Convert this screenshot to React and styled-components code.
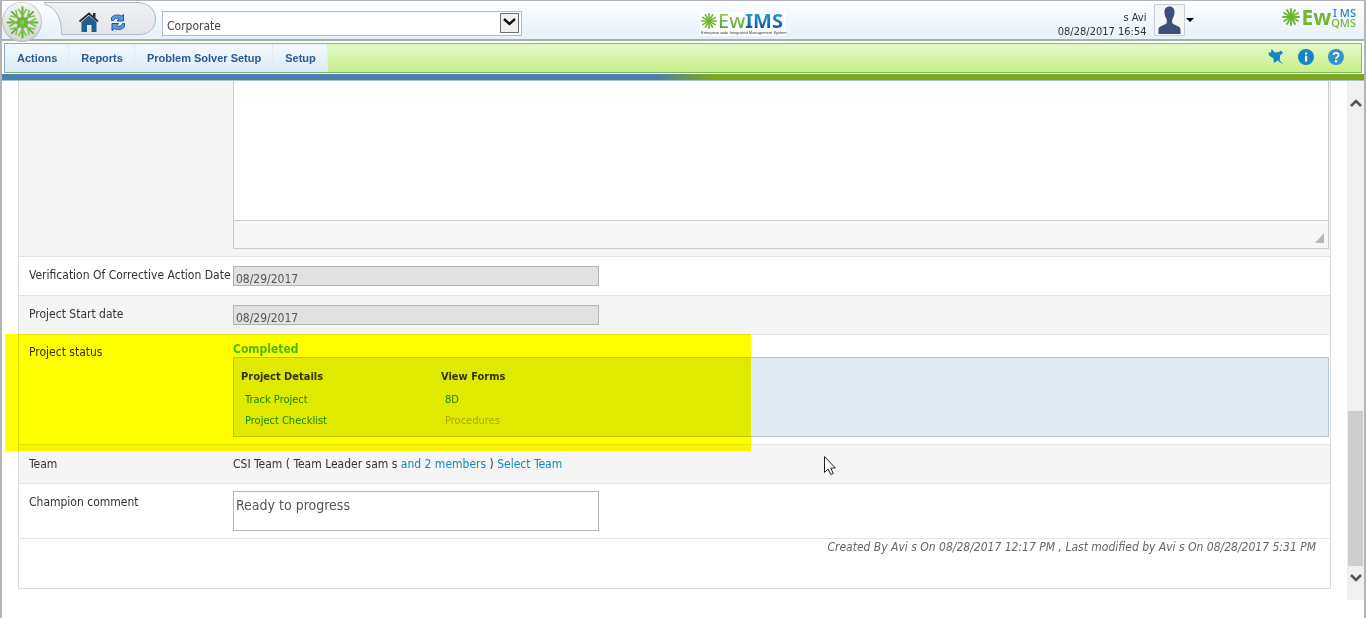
import React from "react";
import styled, { createGlobalStyle, css } from "styled-components";

const Global = createGlobalStyle`
  * { box-sizing: border-box; }
  html, body { margin: 0; background: #fff; }
  body {
    font-family: "DejaVu Sans Condensed", "Noto Sans", sans-serif;
    font-size: 12px;
    line-height: 16px;
    color: #333;
  }
  input, textarea, select, button { font-family: inherit; margin: 0; }
  a { text-decoration: none; }
`;

const Frame = styled.div`
  min-height: 100vh;
  border: solid #b4b4b8;
  border-width: 1px 2px 0 2px;
  display: flex;
  flex-direction: column;
`;

const Header = styled.header`
  height: 40px;
  flex: none;
  display: flex;
  align-items: flex-start;
  background: linear-gradient(#fdfeff, #e6f1fb);
  border-bottom: 2px solid #a4b39c;
`;

const OrbButton = styled.button`
  position: relative;
  z-index: 2;
  width: 42px;
  height: 42px;
  padding: 0;
  border: 0;
  background: none;
  flex: none;
  svg { display: block; }
`;

const QuickTab = styled.div`
  position: relative;
  width: 118px;
  height: 38px;
  flex: none;
  display: flex;
  justify-content: flex-end;
  gap: 10px;
  padding: 10px 36px 0 0;
`;

const TabShape = styled.svg`
  position: absolute;
  left: 0;
  top: 0;
`;

const IconLink = styled.a`
  position: relative;
  display: block;
  height: 22px;
  svg { display: block; }
`;

const OrgPicker = styled.label`
  position: relative;
  width: 360px;
  height: 25px;
  margin-top: 10px;
  svg { position: absolute; right: 2px; top: 2px; pointer-events: none; }
`;

const OrgSelect = styled.select`
  appearance: none;
  width: 100%;
  height: 25px;
  padding: 4px 24px 0 4px;
  border: 1px solid #b3b9c8;
  border-radius: 0;
  background: #fff;
  font-size: 12px;
  color: #444;
`;

const Center = styled.div`
  flex: 1;
  display: flex;
  padding: 11px 0 0 178px;
`;

const Product = styled.div`
  width: 86px;
  height: 24px;
  background: #fff;
`;

const ProductRow = styled.div`
  display: flex;
  align-items: center;
  height: 18px;
  font: 700 20px/18px "Noto Sans", sans-serif;
  svg { margin: 0 1px; flex: none; }
`;

const Tinted = styled.span`
  background: linear-gradient(${(p) => p.$from}, ${(p) => p.$to});
  background-clip: text;
  color: transparent;
  font-weight: ${(p) => p.$weight || 700};
`;

const Tagline = styled.div`
  padding-left: 1px;
  font: 400 4px/5px "Liberation Sans", sans-serif;
  color: #333;
  white-space: nowrap;
`;

const User = styled.button`
  display: flex;
  gap: 8px;
  padding: 3px 0 0;
  border: 0;
  background: none;
  color: #333;
  text-align: right;
  font-size: 11px;
  line-height: 14px;
`;

const UserText = styled.span`
  padding-top: 7px;
  white-space: nowrap;
`;

const Avatar = styled.span`
  display: block;
  width: 31px;
  height: 32px;
  border: 1px solid #c8cdd6;
  background: #f4f6f8;
  svg { display: block; }
`;

const Caret = styled.span`
  margin: 14px 0 0 -7px;
  border: 4px solid transparent;
  border-top-color: #000;
  border-bottom: 0;
`;

const Brand = styled.div`
  display: flex;
  margin: 5px 8px 0 88px;
  color: #74b62e;
  svg { margin: 2px 1px 0 0; }
`;

const BrandEw = styled.span`
  font: 700 21px/22px "Noto Sans", sans-serif;
`;

const BrandStack = styled.span`
  display: flex;
  flex-direction: column;
  align-items: flex-end;
  padding-top: 2px;
  font: 500 11px/10px "Noto Sans", sans-serif;
  span:first-child { color: #2a7fc0; }
`;

const Nav = styled.nav`
  height: 30px;
  margin: 2px;
  display: flex;
  flex: none;
  border: 1px solid #8fa9c4;
  border-bottom-color: #7cb36c;
  background: linear-gradient(#e4f8c8, #c6f088);
`;

const NavItem = styled.a`
  height: 28px;
  padding: 0 12px;
  box-shadow: inset -1px 0 #e8e8ee;
  background: linear-gradient(#f2f9fe, #dcecfa);
  font: 700 11px/28px "Liberation Sans", sans-serif;
  color: #2c5a8a;
  white-space: nowrap;
`;

const NavTools = styled.div`
  margin-left: auto;
  display: flex;
  align-items: center;
  gap: 14px;
  padding: 0 17px 2px 0;
`;

const ToolButton = styled.button`
  width: 16px;
  height: 16px;
  padding: 0;
  border: 0;
  background: none;
  svg { display: block; }
`;

const Stripe = styled.div`
  height: 7px;
  flex: none;
  margin-top: -1px;
  background: linear-gradient(90deg, #4a7fae 48%, #7aa91c 52%);
  border-bottom: 1px solid #a8c4c8;
`;

const Body = styled.div`
  display: flex;
`;

const Main = styled.main`
  flex: 1;
  min-width: 0;
  padding: 0 16px 11px;
`;

const Panel = styled.form`
  border: 1px solid #dcdcdc;
  border-top: 0;
`;

const Row = styled.div`
  position: relative;
  display: grid;
  grid-template-columns: 204px minmax(0, 1fr);
  padding: ${(p) => p.$pad || "9px 1px 9px 10px"};
  border-bottom: 1px solid #e4e4e4;
  background: ${(p) => (p.$shade ? "#f5f5f5" : "#fff")};
`;

const labelStyle = css`
  height: 16px;
  margin-top: ${(p) => p.$drop || 0}px;
  color: #333;
  white-space: nowrap;
`;

const Label = styled.label`${labelStyle}`;
const Term = styled.span`${labelStyle}`;

const Editor = styled.div`
  border: 1px solid #ccc;
  border-top: 0;
`;

const EditorArea = styled.textarea`
  display: block;
  width: 100%;
  height: 140px;
  border: 0;
  border-bottom: 1px solid #ccc;
  resize: none;
  background: #fff;
`;

const EditorStatus = styled.div`
  height: 27px;
  display: flex;
  justify-content: flex-end;
  align-items: flex-end;
  padding: 0 4px 5px 0;
  background: #f7f7f7;
`;

const Grip = styled.span`
  border-left: 9px solid transparent;
  border-bottom: 10px solid #b8b8b8;
`;

const DateInput = styled.input`
  width: 366px;
  height: 20px;
  padding: 5px 2px 0;
  border: 1px solid #b4b4b4;
  background: #e1e1e1;
  font-size: 12px;
  color: #555;
`;

const Comment = styled.textarea`
  display: block;
  width: 366px;
  height: 40px;
  padding: 4px 2px;
  border: 1px solid #b4b4b4;
  resize: none;
  overflow: hidden;
  font-size: 14px;
  line-height: 18px;
  color: #555;
`;

const Status = styled.strong`
  display: block;
  color: #4cb84c;
`;

const DetailBox = styled.div`
  display: flex;
  height: 80px;
  padding: 11px 7px 9px;
  border: 1px solid #b6c6d2;
  background: #dfeaf1;
  font-size: 11px;
`;

const DetailColumn = styled.div`
  width: 200px;
  display: flex;
  flex-direction: column;
  align-items: flex-start;
  color: #333;
`;

const DetailLink = styled.a`
  padding-left: 4px;
  margin-top: ${(p) => (p.$first ? 7 : 5)}px;
  color: ${(p) => (p.$muted ? "#aaa" : "#1b85b8")};
`;

const Highlight = styled.div`
  position: absolute;
  z-index: 3;
  left: -14px;
  top: -1px;
  bottom: -7px;
  width: 746px;
  background: #ff0;
  mix-blend-mode: multiply;
  pointer-events: none;
`;

const TeamLink = styled.a`
  color: #1b85b8;
`;

const Audit = styled.div`
  height: 49px;
  padding-right: 14px;
  text-align: right;
  font-style: italic;
  color: #666;
`;

const Scroller = styled.div`
  width: 17px;
  padding: 10px 0;
  display: flex;
  flex-direction: column;
  align-items: center;
  background: #f0f0f0;
`;

const ScrollButton = styled.button`
  width: 17px;
  height: 24px;
  padding: 0;
  border: 0;
  background: none;
  display: flex;
  align-items: center;
  justify-content: center;
`;

const Track = styled.div`
  flex: 1;
  width: 15px;
  display: flex;
  flex-direction: column;
  justify-content: flex-end;
`;

const Thumb = styled.div`
  height: 155px;
  background: #cdcdcd;
`;

const Pointer = styled.svg`
  position: absolute;
  left: 805px;
  top: 11px;
  z-index: 4;
`;

const SPOKES = [0, 30, 60, 90, 120, 150, 180, 210, 240, 270, 300, 330];
const ARMS = [0, 45, 90, 135, 180, 225, 270, 315];

function Burst({ size, color = "#6db52e" }) {
  return (
    <svg width={size} height={size} viewBox="-20 -20 40 40" aria-hidden="true">
      {SPOKES.map((a) => (
        <path key={a} d="M0 -2V-18" transform={`rotate(${a})`} stroke={color} strokeWidth="4" strokeLinecap="round" />
      ))}
    </svg>
  );
}

function Orb() {
  return (
    <svg width="42" height="42" viewBox="0 0 42 42" aria-hidden="true">
      <defs>
        <linearGradient id="orb" x1="0" y1="0" x2="0" y2="1">
          <stop offset="0" stopColor="#f4f5f5" />
          <stop offset="1" stopColor="#d3d7d6" />
        </linearGradient>
        <radialGradient id="leaf" gradientUnits="userSpaceOnUse" cx="0" cy="0" r="16">
          <stop offset="0" stopColor="#8ccf4e" />
          <stop offset="1" stopColor="#5cab34" />
        </radialGradient>
      </defs>
      <circle cx="20" cy="21" r="20" fill="#bcc2c6" />
      <circle cx="20" cy="20.5" r="19" fill="url(#orb)" />
      <g transform="translate(20.5 21.5)" fill="none" strokeLinecap="round" stroke="#62b034">
        <circle r="6" fill="url(#leaf)" stroke="none" />
        {ARMS.map((a) => (
          <g key={a} transform={`rotate(${a})`}>
            <path d="M0 -3V-15" strokeWidth="2" />
            <path d="M0 -7L-3.800 -13M0 -7L3.800 -13" strokeWidth="1.600" stroke="#7cc247" />
          </g>
        ))}
      </g>
    </svg>
  );
}

export default function App() {
  return (
    <>
      <Global />
      <Frame>
        <Header>
          <OrbButton type="button" aria-label="Main menu"><Orb /></OrbButton>
          <QuickTab>
            <TabShape width="118" height="38" viewBox="0 0 118 38" aria-hidden="true">
              <defs>
                <linearGradient id="tab" x1="0" y1="0" x2="0" y2="1">
                  <stop offset="0" stopColor="#f1f2f5" />
                  <stop offset="1" stopColor="#e2e4e9" />
                </linearGradient>
              </defs>
              <path d="M-2 1.5H94C106 2 111.500 10 111.500 18S106 33.500 95 33.500H17.500C18 17 11 4 -2 3Z" fill="url(#tab)" stroke="#b2b6be" />
            </TabShape>
            <IconLink href="#home" aria-label="Home">
              <svg width="22" height="22" viewBox="0 0 22 22">
                <path d="M3.500 11L11 4.500L18.500 11V21H13.500V14H9V21H3.500Z" fill="#22608f" />
                <path d="M1.500 10.500L11 2.500L20 10.500" fill="none" stroke="#2b2b2b" strokeWidth="1.800" />
                <path d="M15 2H17.500V7L15 5Z" fill="#2b2b2b" />
              </svg>
            </IconLink>
            <IconLink href="#refresh" aria-label="Refresh">
              <svg width="16" height="22" viewBox="0 0 16 22">
                <g fill="#5b9bdc" stroke="#1e55a4" strokeWidth="1">
                  <path d="M1.500 9.500V6.500C3 4 8 3 11.500 5L13.500 3.500V10H7L9 7.800C7 6.500 4.500 7 3.500 9.500Z" />
                  <path d="M14.500 12.500V15.500C13 18.500 8 19.500 4.500 17.500L2 19.500V12.500H8.500L6.500 14.700C8.500 16 11.500 15.500 12.500 12.500Z" />
                </g>
              </svg>
            </IconLink>
          </QuickTab>
          <OrgPicker>
            <OrgSelect aria-label="Organisation" defaultValue="Corporate"><option>Corporate</option></OrgSelect>
            <svg width="20" height="20" viewBox="0 0 20 20" aria-hidden="true">
              <rect x="0.5" y="0.5" width="18" height="19" fill="#f0f0f0" stroke="#707070" />
              <path d="M4 6L9.500 11L15 6" fill="none" stroke="#111" strokeWidth="2.400" />
            </svg>
          </OrgPicker>
          <Center>
            <Product>
              <ProductRow>
                <Burst size={16} />
                <Tinted $from="#a5cf5a" $to="#4b9e35" $weight={500}>Ew</Tinted>
                <Tinted $from="#2aa0dc" $to="#0c4f94">IMS</Tinted>
              </ProductRow>
              <Tagline>Enterprise wide Integrated Management System</Tagline>
            </Product>
          </Center>
          <User type="button">
            <UserText>s Avi<br />08/28/2017 16:54</UserText>
            <Avatar>
              <svg width="29" height="30" viewBox="0 0 29 30" aria-hidden="true">
                <path d="M14.500 1.500C11 1.500 9.300 4 9.500 7.500C9.600 11 11 13 11.800 14.500V18C10 20.500 4 20.500 3.500 24V29H25.500V24C25 20.500 19 20.500 17.200 18V14.500C18 13 19.400 11 19.500 7.500C19.700 4 18 1.500 14.500 1.500Z" fill="#3c4e79" />
              </svg>
            </Avatar>
            <Caret />
          </User>
          <Brand>
            <Burst size={18} />
            <BrandEw>Ew</BrandEw>
            <BrandStack><span>I MS</span><span>QMS</span></BrandStack>
          </Brand>
        </Header>

        <Nav>
          <NavItem href="#actions">Actions</NavItem>
          <NavItem href="#reports">Reports</NavItem>
          <NavItem href="#setup-solver">Problem Solver Setup</NavItem>
          <NavItem href="#setup">Setup</NavItem>
          <NavTools>
            <ToolButton type="button" aria-label="Pin">
              <svg width="16" height="16" viewBox="0 0 16 16">
                <path d="M3.500 0L7 3.500L11 3L13 1.500L15 4L12 6.500V9.500L11.500 11L15.500 15.500L9.500 11.500L6 14L5.500 9.500L1 6.500L0.500 3.500L3 3.500Z" fill="#1784c4" />
              </svg>
            </ToolButton>
            <ToolButton type="button" aria-label="Information">
              <svg width="16" height="16" viewBox="0 0 16 16">
                <circle cx="8" cy="8" r="8" fill="#1784c4" />
                <path d="M7 3.500H9.200V5.500H7ZM7 6.700H9.200V12.500H7Z" fill="#fff" />
              </svg>
            </ToolButton>
            <ToolButton type="button" aria-label="Help">
              <svg width="16" height="16" viewBox="0 0 16 16">
                <circle cx="8" cy="8" r="8" fill="#2f93cf" />
                <path d="M5.500 6C5.500 3.200 10.600 3.200 10.600 6C10.600 8 8 7.800 8 10" fill="none" stroke="#fff" strokeWidth="1.800" />
                <circle cx="8" cy="12.300" r="1.200" fill="#fff" />
              </svg>
            </ToolButton>
          </NavTools>
        </Nav>
        <Stripe />

        <Body>
          <Main>
            <Panel>
              <Row $shade $pad="0 1px 7px 10px">
                <span />
                <Editor>
                  <EditorArea aria-label="Corrective action" />
                  <EditorStatus><Grip /></EditorStatus>
                </Editor>
              </Row>
              <Row>
                <Label $drop={1} htmlFor="verify">Verification Of Corrective Action Date</Label>
                <DateInput id="verify" readOnly defaultValue="08/29/2017" />
              </Row>
              <Row $shade>
                <Label $drop={1} htmlFor="start">Project Start date</Label>
                <DateInput id="start" readOnly defaultValue="08/29/2017" />
              </Row>
              <Row $pad="6px 1px 7px 10px">
                <Term $drop={3}>Project status</Term>
                <div>
                  <Status>Completed</Status>
                  <DetailBox>
                    <DetailColumn>
                      <strong>Project Details</strong>
                      <DetailLink $first href="#track">Track Project</DetailLink>
                      <DetailLink href="#checklist">Project Checklist</DetailLink>
                    </DetailColumn>
                    <DetailColumn>
                      <strong>View Forms</strong>
                      <DetailLink $first href="#8d">8D</DetailLink>
                      <DetailLink $muted href="#procedures">Procedures</DetailLink>
                    </DetailColumn>
                  </DetailBox>
                </div>
                <Highlight />
              </Row>
              <Row $shade $pad="11px 1px 11px 10px">
                <Term>Team</Term>
                <div>
                  CSI Team ( Team Leader sam s <TeamLink href="#members">and 2 members</TeamLink> ) <TeamLink href="#select">Select Team</TeamLink>
                </div>
                <Pointer width="12" height="20" viewBox="0 0 12 20" aria-hidden="true">
                  <path d="M0.5 0.5V16.500L4 13L6.800 18.500L9.200 17.500L6.800 12H11.300Z" fill="#fff" stroke="#222" />
                </Pointer>
              </Row>
              <Row $pad="7px 1px 7px 10px">
                <Label $drop={3} htmlFor="comment">Champion comment</Label>
                <Comment id="comment" defaultValue="Ready to progress" />
              </Row>
              <Audit>Created By Avi s On 08/28/2017 12:17 PM , Last modified by Avi s On 08/28/2017 5:31 PM</Audit>
            </Panel>
          </Main>
          <Scroller>
            <ScrollButton type="button" aria-label="Scroll up">
              <svg width="12" height="10" viewBox="0 0 12 10"><path d="M1 8L6 3L11 8" fill="none" stroke="#555" strokeWidth="2.600" /></svg>
            </ScrollButton>
            <Track><Thumb /></Track>
            <ScrollButton type="button" aria-label="Scroll down">
              <svg width="12" height="10" viewBox="0 0 12 10"><path d="M1 2L6 7L11 2" fill="none" stroke="#555" strokeWidth="2.600" /></svg>
            </ScrollButton>
          </Scroller>
        </Body>
      </Frame>
    </>
  );
}
